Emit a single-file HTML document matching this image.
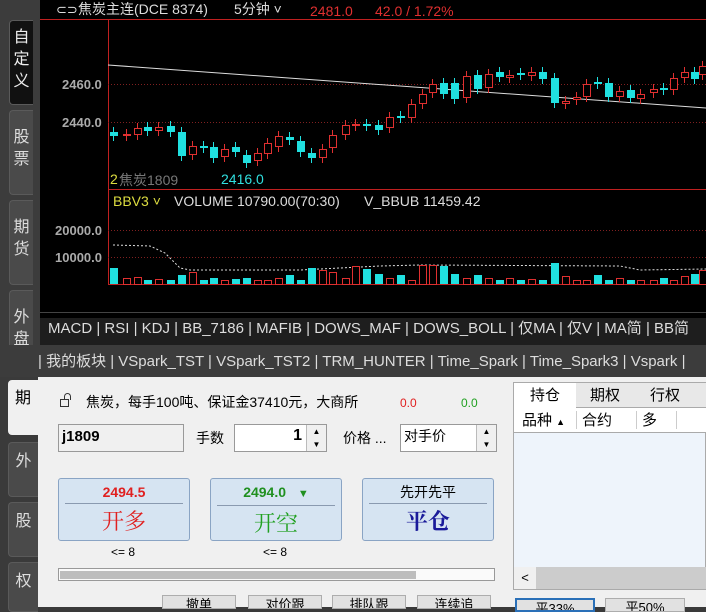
<!DOCTYPE html>
<html><head><meta charset="utf-8">
<style>
*{margin:0;padding:0;box-sizing:border-box}
body{width:706px;height:607px;overflow:hidden;background:#3a3a3a;font-family:"Liberation Sans","Noto Sans CJK SC",sans-serif;position:relative}
.a{position:absolute;white-space:nowrap}
.vt{position:absolute;left:9px;width:24px;background:#4a4a4a;border:1px solid #5a5a5a;border-right:none;color:#ddd;font-size:16px;line-height:22px;text-align:center;border-radius:4px 0 0 4px}
.btn{position:absolute;top:478px;width:132px;height:63px;background:#d6e4f2;border:1px solid #8aa4c4;border-radius:3px;text-align:center}
.btn .p{font-size:14px;font-weight:bold;line-height:20px;margin-top:3px}
.btn .l{height:1px;background:#8a9ab0;margin:1px 6px 0}
.btn .b{font-size:22px;line-height:34px;font-family:"Noto Serif CJK SC","Liberation Serif",serif}
.sb{position:absolute;top:595px;width:74px;height:14px;background:#e1e1e1;border:1px solid #adadad;font-size:13px;text-align:center;line-height:18px;overflow:hidden}
</style></head><body>
<div class="a" style="left:0;top:0;width:40px;height:345px;background:#3c3c3c"></div>
<div class="vt" style="top:20px;height:85px;background:#111;color:#eee;padding-top:6px">自<br>定<br>义</div>
<div class="vt" style="top:110px;height:85px;padding-top:16px">股<br>票</div>
<div class="vt" style="top:200px;height:85px;padding-top:16px">期<br>货</div>
<div class="vt" style="top:290px;height:60px;padding-top:16px">外<br>盘</div>
<div class="a" style="left:40px;top:0;width:666px;height:318px;background:#000"></div>
<svg class="a" style="left:0;top:0" width="706" height="318" id="ch">
<line x1="40" y1="19.5" x2="706" y2="19.5" stroke="#c02020"/>
<line x1="108.5" y1="19" x2="108.5" y2="285" stroke="#c02020"/>
<line x1="108" y1="189.5" x2="706" y2="189.5" stroke="#c02020"/>
<line x1="108" y1="284.5" x2="706" y2="284.5" stroke="#c02020"/>
<line x1="108" y1="84.5" x2="706" y2="84.5" stroke="#802020" stroke-dasharray="1,2"/>
<line x1="108" y1="122.5" x2="706" y2="122.5" stroke="#802020" stroke-dasharray="1,2"/>
<line x1="108" y1="230.5" x2="706" y2="230.5" stroke="#802020" stroke-dasharray="1,2"/>
<line x1="108" y1="257.5" x2="706" y2="257.5" stroke="#802020" stroke-dasharray="1,2"/>
<line x1="108" y1="65" x2="706" y2="108" stroke="#ddd"/>
<polyline fill="none" stroke="#ddd" stroke-dasharray="2,2" points="113,245 150,246 165,253 180,268 190,270 300,270 380,266 420,265 620,266 640,270 706,269"/>
<line x1="40" y1="312.5" x2="706" y2="312.5" stroke="#444"/>
<g id="cd"></g>
<text x="56" y="14" fill="#ddd" font-size="13" font-family="Liberation Sans">⊂⊃</text>
<text x="78" y="14" fill="#ddd" font-size="14" font-family="Liberation Sans,Noto Sans CJK SC">焦炭主连(DCE  8374)</text>
<text x="234" y="14" fill="#ddd" font-size="14" font-family="Liberation Sans,Noto Sans CJK SC">5分钟 ˅</text>
<text x="310" y="16" fill="#e03030" font-size="14" font-family="Liberation Sans">2481.0</text>
<text x="375" y="16" fill="#e03030" font-size="14" font-family="Liberation Sans">42.0 / 1.72%</text>
<text x="62" y="89" fill="#aaa" font-size="13" font-weight="bold" font-family="Liberation Sans">2460.0</text>
<text x="62" y="127" fill="#aaa" font-size="13" font-weight="bold" font-family="Liberation Sans">2440.0</text>
<text x="55" y="235" fill="#aaa" font-size="13" font-weight="bold" font-family="Liberation Sans">20000.0</text>
<text x="55" y="262" fill="#aaa" font-size="13" font-weight="bold" font-family="Liberation Sans">10000.0</text>
<text x="110" y="184" fill="#dddd40" font-size="14" font-family="Liberation Sans">2</text>
<text x="119" y="185" fill="#777" font-size="14" font-family="Liberation Sans,Noto Sans CJK SC">焦炭1809</text>
<text x="221" y="184" fill="#30e0e0" font-size="14" font-family="Liberation Sans">2416.0</text>
<text x="113" y="206" fill="#dddd40" font-size="14" font-family="Liberation Sans">BBV3 ˅</text>
<text x="174" y="206" fill="#ddd" font-size="14" font-family="Liberation Sans">VOLUME 10790.00(70:30)</text>
<text x="364" y="206" fill="#ddd" font-size="14" font-family="Liberation Sans">V_BBUB 11459.42</text>
</svg>
<div class="a" style="left:40px;top:318px;width:666px;height:27px;background:#1e1e1e;color:#ddd;font-size:15px;line-height:22px;padding-left:8px">MACD | RSI | KDJ | BB_7186 | MAFIB | DOWS_MAF | DOWS_BOLL | 仅MA | 仅V | MA简 | BB简</div>
<div class="a" style="left:0;top:345px;width:706px;height:32px;background:#3c3c3c;color:#ddd;font-size:15px;line-height:34px;padding-left:38px">| 我的板块 | VSpark_TST | VSpark_TST2 | TRM_HUNTER | Time_Spark | Time_Spark3 | Vspark |</div>
<div class="a" style="left:38px;top:377px;width:668px;height:230px;background:#f0f0f0"></div>
<div class="vt" style="top:380px;height:55px;left:8px;width:30px;background:#f0f0f0;color:#000;border:none;padding-top:8px">期</div>
<div class="vt" style="top:442px;height:55px;left:8px;width:30px;padding-top:8px">外</div>
<div class="vt" style="top:502px;height:55px;left:8px;width:30px;padding-top:8px">股</div>
<div class="vt" style="top:562px;height:50px;left:8px;width:30px;padding-top:8px">权</div>
<div class="a" style="left:60px;top:399px;width:9px;height:8px;border:1.5px solid #333"></div>
<div class="a" style="left:62px;top:393px;width:7px;height:7px;border:1.5px solid #333;border-bottom:none;border-radius:4px 4px 0 0;margin-left:2px"></div>
<div class="a" style="left:86px;top:392px;font-size:14px">焦炭，每手100吨、保证金37410元，大商所</div>
<div class="a" style="left:400px;top:396px;font-size:12px;color:#e02020">0.0</div>
<div class="a" style="left:461px;top:396px;font-size:12px;color:#20a020">0.0</div>
<div class="a" style="left:58px;top:424px;width:126px;height:28px;background:#f0f0f0;border:1px solid #999;font-size:15px;font-weight:bold;line-height:24px;padding-left:3px">j1809</div>
<div class="a" style="left:196px;top:428px;font-size:14px">手数</div>
<div class="a" style="left:234px;top:424px;width:93px;height:28px;background:#fff;border:1px solid #999"><span style="position:absolute;right:24px;top:2px;font-size:16px;font-weight:bold">1</span><div style="position:absolute;right:0;top:0;width:20px;height:26px;border-left:1px solid #bbb;font-size:8px;text-align:center;line-height:13px;background:#f0f0f0">▲<br>▼</div></div>
<div class="a" style="left:343px;top:428px;font-size:14px">价格 ...</div>
<div class="a" style="left:400px;top:424px;width:97px;height:28px;background:#fff;border:1px solid #999;font-size:14px;padding:1px 3px">对手价<div style="position:absolute;right:0;top:0;width:20px;height:26px;border-left:1px solid #bbb;font-size:8px;text-align:center;line-height:13px;background:#f0f0f0">▲<br>▼</div></div>
<div class="btn" style="left:58px"><div class="p" style="color:#e02020">2494.5</div><div class="l"></div><div class="b" style="color:#e02020">开多</div></div>
<div class="btn" style="left:210px"><div class="p" style="color:#209020">2494.0 <span style="font-size:11px;margin-left:8px">▼</span></div><div class="l"></div><div class="b" style="color:#20a020">开空</div></div>
<div class="btn" style="left:362px"><div class="p" style="font-weight:normal">先开先平</div><div class="l"></div><div class="b" style="color:#1a1a9a;font-weight:bold">平仓</div></div>
<div class="a" style="left:111px;top:545px;font-size:12px">&lt;= 8</div>
<div class="a" style="left:263px;top:545px;font-size:12px">&lt;= 8</div>
<div class="a" style="left:58px;top:568px;width:437px;height:13px;background:#fafafa;border:1px solid #999"><div style="position:absolute;left:1px;top:2px;width:356px;height:8px;background:#bdbdbd"></div></div>
<div class="sb" style="left:162px">撤单</div>
<div class="sb" style="left:248px">对价跟</div>
<div class="sb" style="left:332px">排队跟</div>
<div class="sb" style="left:417px">连续追</div>
<div class="a" style="left:513px;top:382px;width:193px;height:208px;background:#eef4fb;border:1px solid #aaa"></div>
<div class="a" style="left:514px;top:383px;width:192px;height:25px;background:#e8e8e8;border-bottom:1px solid #aaa;font-size:15px;line-height:26px">
<span style="position:absolute;left:0;width:62px;height:25px;background:#fff;text-align:center">持仓</span>
<span style="position:absolute;left:76px">期权</span><span style="position:absolute;left:136px">行权</span></div>
<div class="a" style="left:514px;top:408px;width:192px;height:25px;background:#fff;border-bottom:1px solid #aaa;font-size:15px;line-height:26px">
<span style="position:absolute;left:8px">品种 <span style="font-size:9px">▲</span></span><span style="position:absolute;left:62px;top:3px;height:18px;border-left:1px solid #ccc"></span>
<span style="position:absolute;left:68px">合约</span><span style="position:absolute;left:122px;top:3px;height:18px;border-left:1px solid #ccc"></span>
<span style="position:absolute;left:128px">多</span><span style="position:absolute;left:162px;top:3px;height:18px;border-left:1px solid #ccc"></span></div>
<div class="a" style="left:514px;top:567px;width:192px;height:22px;background:#ccc"><div style="width:22px;height:22px;background:#f0f0f0;font-size:13px;text-align:center;line-height:22px">&lt;</div></div>
<div class="sb" style="left:515px;top:598px;width:80px;border:2px solid #2a70b8">平33%</div>
<div class="sb" style="left:605px;top:598px;width:80px">平50%</div>
<script>
var d=[[113,132,136,1],[126,134,136,0],[137,128,135,0],[147,127,131,1],[158,127,131,0],[170,126,132,1],[181,132,156,1],[192,146,155,0],[203,146,148,1],[213,147,158,1],[224,149,157,0],[235,147,152,1],[246,155,163,1],[257,153,161,0],[267,143,154,0],[278,136,147,0],[289,137,140,1],[300,141,152,1],[311,153,158,1],[322,149,158,0],[332,135,148,0],[345,125,135,0],[355,124,126,0],[366,124,126,1],[378,125,130,1],[389,117,128,0],[400,116,118,1],[411,104,118,0],[422,94,104,0],[432,84,93,0],[443,83,94,1],[454,83,99,1],[466,76,98,0],[477,75,89,1],[488,74,88,0],[499,72,77,1],[509,75,78,0],[520,73,75,1],[531,72,76,0],[542,72,79,1],[554,78,103,1],[565,101,104,0],[576,97,100,0],[586,84,97,0],[597,82,84,1],[608,83,97,1],[619,91,97,0],[630,90,98,1],[640,94,99,0],[653,89,93,0],[663,88,90,1],[673,78,90,0],[684,72,78,0],[694,72,79,1],[702,66,75,0]];
var vh=[16,6,7,4,5,4,9,12,4,6,4,5,6,4,4,6,9,4,16,14,12,6,18,15,10,6,9,4,19,19,18,10,6,9,6,4,6,4,5,4,21,8,4,4,9,4,6,4,4,4,6,4,8,10,14];
var s='';d.forEach(function(c,i){var col=c[3]?'#20e0e0':'#e03030';var t=Math.min(c[1],c[2]),h=Math.max(2,Math.abs(c[2]-c[1]));
s+='<line x1="'+(c[0]+.5)+'" y1="'+(t-5)+'" x2="'+(c[0]+.5)+'" y2="'+(t+h+5)+'" stroke="'+col+'"/>';
if(c[3])s+='<rect x="'+(c[0]-3)+'" y="'+t+'" width="8" height="'+h+'" fill="'+col+'"/>';else s+='<rect x="'+(c[0]-2.5)+'" y="'+(t+.5)+'" width="7" height="'+(h-1)+'" fill="#000" stroke="'+col+'"/>';
var v=vh[i]||5;if(c[3])s+='<rect x="'+(c[0]-3)+'" y="'+(284-v)+'" width="8" height="'+v+'" fill="'+col+'"/>';else s+='<rect x="'+(c[0]-2.5)+'" y="'+(284.5-v)+'" width="7" height="'+v+'" fill="#000" stroke="'+col+'"/>';});
document.getElementById('cd').innerHTML=s;
</script>
</body></html>
